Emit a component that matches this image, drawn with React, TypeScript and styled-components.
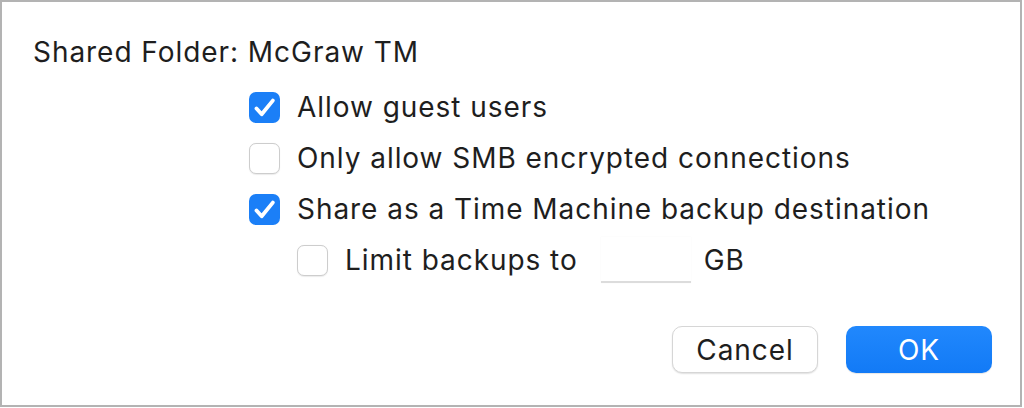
import React from "react";
import styled, { createGlobalStyle } from "styled-components";

const GlobalStyle = createGlobalStyle`
  html, body { margin: 0; padding: 0; background: #ffffff; }
  body { font-family: Inter, "Noto Sans", "Liberation Sans", sans-serif; color: #1e1e1e; }
`;

const Frame = styled.div`
  box-sizing: border-box;
  width: 1022px;
  height: 407px;
  border: 2px solid #b3b3b3;
  background: #ffffff;
  padding: 34px 28px 32px 31px;
  display: flex;
  flex-direction: column;
`;

const Title = styled.div`
  font-size: 28px;
  line-height: 32px;
  color: #1e1e1e;
  letter-spacing: 0.95px;
`;

const Options = styled.div`
  margin-top: 23px;
  padding-left: 216px;
  display: flex;
  flex-direction: column;
  gap: 19px;
`;

const Row = styled.label<{ $indent?: boolean }>`
  display: flex;
  align-items: center;
  height: 32px;
  margin-left: ${(p) => (p.$indent ? "48px" : "0")};
  font-size: 28px;
  color: #1e1e1e;
  letter-spacing: 0.95px;
`;

const Box = styled.span<{ $checked: boolean }>`
  box-sizing: border-box;
  width: 31px;
  height: 31px;
  border-radius: 7px;
  flex: none;
  margin-right: 17px;
  display: flex;
  align-items: center;
  justify-content: center;
  background: ${(p) => (p.$checked ? "#1b7ff7" : "#ffffff")};
  border: ${(p) => (p.$checked ? "none" : "1px solid #cdcdcd")};
  box-shadow: ${(p) => (p.$checked ? "none" : "0 0.5px 1px rgba(0,0,0,0.08)")};
`;

const Field = styled.span`
  box-sizing: border-box;
  display: inline-block;
  width: 90px;
  height: 46px;
  margin: 0 13px 0 23px;
  background: #ffffff;
  border-bottom: 2px solid #dcdcdc;
  box-shadow: 0 0 1px rgba(0, 0, 0, 0.06);
`;

const Footer = styled.div`
  margin-top: auto;
  display: flex;
  justify-content: flex-end;
  gap: 28px;
`;

const Button = styled.button<{ $primary?: boolean }>`
  box-sizing: border-box;
  width: 146px;
  height: 47px;
  border-radius: 10px;
  font-family: Inter, "Noto Sans", "Liberation Sans", sans-serif;
  font-size: 28px;
  letter-spacing: 0.95px;
  padding: 0;
  cursor: pointer;
  color: ${(p) => (p.$primary ? "#ffffff" : "#1e1e1e")};
  background: ${(p) =>
    p.$primary ? "linear-gradient(#2188fd, #127af6)" : "#ffffff"};
  border: ${(p) => (p.$primary ? "none" : "1px solid #d6d6d6")};
  box-shadow: ${(p) =>
    p.$primary ? "0 1px 1px rgba(0,0,0,0.1)" : "0 1px 1.5px rgba(0,0,0,0.12)"};
`;

const Check = () => (
  <svg width="31" height="31" viewBox="0 0 31 31">
    <path
      d="M7.5 16.5 L12.7 22.3 L23.8 8.6"
      fill="none"
      stroke="#ffffff"
      strokeWidth="3.8"
      strokeLinecap="round"
      strokeLinejoin="round"
    />
  </svg>
);

const CheckBox = ({ checked }: { checked: boolean }) => (
  <Box $checked={checked}>{checked && <Check />}</Box>
);

export default function App() {
  return (
    <>
      <GlobalStyle />
      <Frame>
        <Title>Shared Folder: McGraw TM</Title>
        <Options>
          <Row>
            <CheckBox checked />
            Allow guest users
          </Row>
          <Row>
            <CheckBox checked={false} />
            Only allow SMB encrypted connections
          </Row>
          <Row>
            <CheckBox checked />
            Share as a Time Machine backup destination
          </Row>
          <Row $indent>
            <CheckBox checked={false} />
            Limit backups to
            <Field />
            GB
          </Row>
        </Options>
        <Footer>
          <Button>Cancel</Button>
          <Button $primary>OK</Button>
        </Footer>
      </Frame>
    </>
  );
}
